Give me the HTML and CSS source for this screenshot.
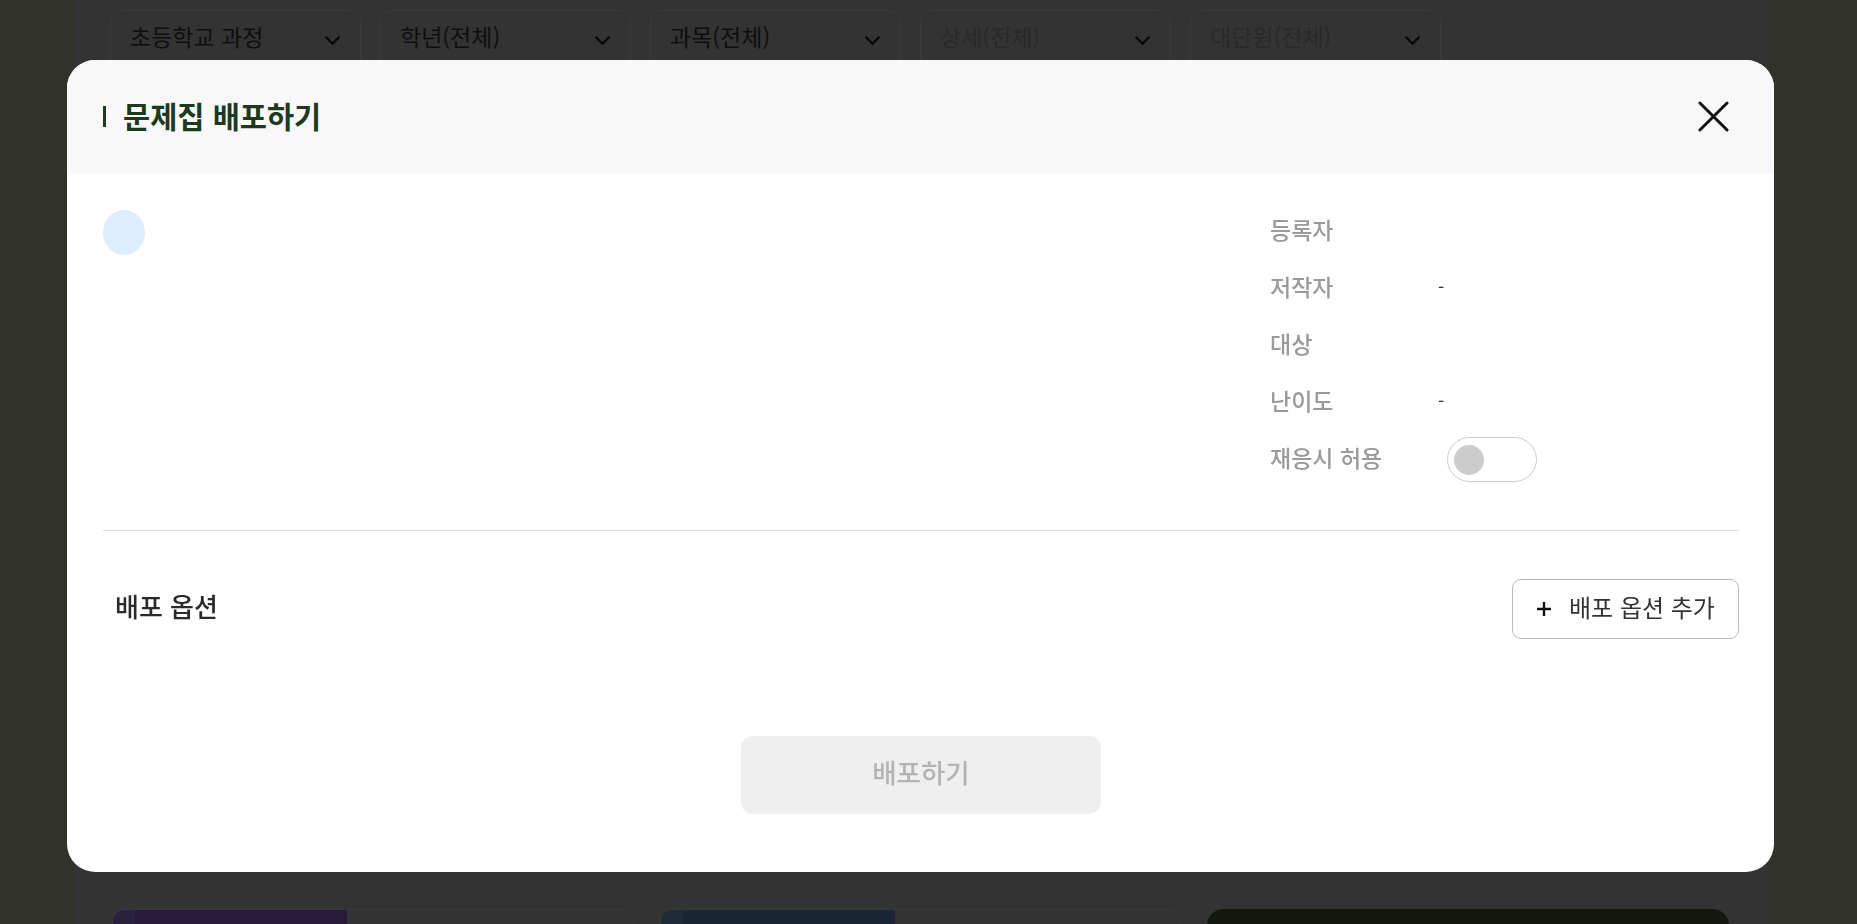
FILE: index.html
```html
<!DOCTYPE html>
<html lang="ko">
<head>
<meta charset="utf-8">
<title>문제집 배포하기</title>
<link rel="stylesheet" href="styles.css">
</head>
<body>
<div class="page">
  <div class="filters">
    <div class="select"><span>초등학교 과정</span><svg class="chev" viewBox="0 0 16 10"><path d="M1.5 1.5 8 8l6.5-6.5"/></svg></div>
    <div class="select"><span>학년(전체)</span><svg class="chev" viewBox="0 0 16 10"><path d="M1.5 1.5 8 8l6.5-6.5"/></svg></div>
    <div class="select"><span>과목(전체)</span><svg class="chev" viewBox="0 0 16 10"><path d="M1.5 1.5 8 8l6.5-6.5"/></svg></div>
    <div class="select disabled"><span>상세(전체)</span><svg class="chev" viewBox="0 0 16 10"><path d="M1.5 1.5 8 8l6.5-6.5"/></svg></div>
    <div class="select disabled"><span>대단원(전체)</span><svg class="chev" viewBox="0 0 16 10"><path d="M1.5 1.5 8 8l6.5-6.5"/></svg></div>
  </div>
  <div class="cards">
    <div class="card"><div class="thumb thumb-purple"></div></div>
    <div class="card"><div class="thumb thumb-blue"></div></div>
    <div class="card card-dark"></div>
  </div>
</div>

<div class="overlay">
  <div class="modal">
    <div class="modal-head">
      <h2 class="modal-title"><span class="bar"></span><span class="title-text">문제집 배포하기</span></h2>
      <button class="close" aria-label="닫기">
        <svg viewBox="0 0 32 32"><path d="M2 2 30 30M30 2 2 30"/></svg>
      </button>
    </div>
    <div class="modal-body">
      <div class="info">
        <div class="avatar"></div>
        <dl class="meta">
          <dt>등록자</dt><dd></dd>
          <dt>저작자</dt><dd class="dash">-</dd>
          <dt>대상</dt><dd></dd>
          <dt>난이도</dt><dd class="dash">-</dd>
          <dt>재응시 허용</dt><dd><span class="toggle"><span class="knob"></span></span></dd>
        </dl>
      </div>
      <hr class="divider">
      <div class="options">
        <span class="options-title">배포 옵션</span>
        <button class="add-btn">
          <svg viewBox="0 0 16 16"><path d="M8 1v14M1 8h14"/></svg>
          <span class="add-text">배포 옵션 추가</span>
        </button>
      </div>
      <div class="submit-wrap">
        <button class="submit" disabled>배포하기</button>
      </div>
    </div>
  </div>
</div>
</body>
</html>
```
FILE: styles.css
```css
* { box-sizing: border-box; }

html, body {
  margin: 0;
  height: 100%;
  overflow: hidden;
}

body {
  background: #30322b;
  font-family: "Noto Sans CJK KR", "Noto Sans", sans-serif;
}

.page {
  margin-left: 74px;
  width: 1693px;
  height: 924px;
  background: #333333;
  padding: 10px 0 0 36px;
}

.filters {
  display: flex;
  gap: 19px;
}

.select {
  width: 251px;
  height: 76px;
  border: 1px solid #3b3b3b;
  border-radius: 12px;
  padding: 8px 19px 0 19px;
  display: flex;
  align-items: flex-start;
  justify-content: space-between;
  font-size: 23px;
  color: #0e0e0e;
}

.select.disabled { color: #292929; }

.chev {
  width: 17px;
  height: 11px;
  margin-top: 16px;
  fill: none;
  stroke: #050505;
  stroke-width: 2;
}

.cards {
  margin-top: 823px;
  margin-left: 2px;
  width: 1617px;
  display: grid;
  grid-template-columns: repeat(3, 1fr);
  gap: 26px;
}

.card {
  height: 60px;
  border: 1px solid #3a3a3a;
  border-radius: 12px 12px 0 0;
  overflow: hidden;
  display: flex;
}

.thumb { width: 234px; height: 100%; }
.thumb-purple { background: linear-gradient(90deg, #2a2040 0, #2a2040 22px, #251b38 22px); }
.thumb-blue { background: linear-gradient(90deg, #1d2a38 0, #1d2a38 22px, #1a2635 22px); }
.card-dark { background: #121710; border-color: #121710; border-radius: 16px 16px 0 0; }

/* overlay */
.overlay {
  position: fixed;
  inset: 0;
  padding: 60px 0 0 67px;
}

.modal {
  width: 1707px;
  height: 812px;
  background: #ffffff;
  border-radius: 28px;
  overflow: hidden;
  display: flex;
  flex-direction: column;
}

.modal-head {
  height: 113px;
  flex: none;
  background: #f8f8f8;
  display: flex;
  align-items: center;
  justify-content: space-between;
  padding: 0 45px 0 36px;
}

.modal-title {
  margin: 0;
  display: flex;
  align-items: center;
  font-size: 29.5px;
  font-weight: 700;
  color: #1d3a1f;
}

.title-text { padding-bottom: 4px; }

.bar {
  width: 3px;
  height: 21px;
  background: #1d3a1f;
  margin-right: 17px;
}

.close {
  width: 31px;
  height: 31px;
  padding: 0;
  border: 0;
  background: none;
  display: flex;
}

.close svg {
  width: 31px;
  height: 31px;
  fill: none;
  stroke: #111;
  stroke-width: 3;
  stroke-linecap: round;
}

.modal-body {
  padding: 30px 35px 0 36px;
}

.info {
  display: flex;
  justify-content: space-between;
  align-items: flex-start;
}

.avatar {
  width: 42px;
  height: 45px;
  margin-top: 7px;
  border-radius: 50%;
  background: #ddeeff;
}

.meta {
  margin: 0;
  width: 469px;
  display: grid;
  grid-template-columns: 168px 1fr;
  grid-auto-rows: 57px;
  align-items: center;
}

.meta dt {
  font-size: 23px;
  font-weight: 500;
  color: #9a9a9a;
  padding-bottom: 6px;
}

.meta dd {
  margin: 0;
  font-size: 18px;
  color: #333;
  display: flex;
  align-items: center;
}

.meta dd.dash { padding-bottom: 6px; }

.toggle {
  width: 90px;
  height: 45px;
  margin-left: 9px;
  border: 1px solid #cccccc;
  border-radius: 23px;
  display: flex;
  align-items: center;
  padding-left: 6px;
  background: #fff;
}

.knob {
  width: 30px;
  height: 30px;
  border-radius: 50%;
  background: #cccccc;
}

.divider {
  margin: 42px 0 0;
  border: 0;
  border-top: 1px solid #dddddd;
}

.options {
  margin-top: 48px;
  display: flex;
  align-items: center;
  justify-content: space-between;
}

.options-title {
  padding: 0 0 7px 12px;
  font-size: 26px;
  font-weight: 500;
  color: #2a2a2a;
}

.add-btn {
  width: 227px;
  height: 60px;
  border: 1px solid #b9b9b9;
  border-radius: 9px;
  background: #fff;
  display: flex;
  align-items: center;
  padding: 0 0 0 23px;
  gap: 17px;
  font-family: inherit;
  font-size: 24px;
  color: #333;
}

.add-text { padding-bottom: 6px; }

.add-btn svg {
  width: 16px;
  height: 16px;
  fill: none;
  stroke: #111;
  stroke-width: 2.4;
}

.submit-wrap {
  margin-top: 97px;
  display: flex;
  justify-content: center;
}

.submit {
  width: 360px;
  height: 78px;
  border: 0;
  border-radius: 12px;
  background: #efefef;
  font-family: inherit;
  font-size: 26.5px;
  font-weight: 500;
  color: #b3b3b3;
  padding: 0 0 7px;
}
```
